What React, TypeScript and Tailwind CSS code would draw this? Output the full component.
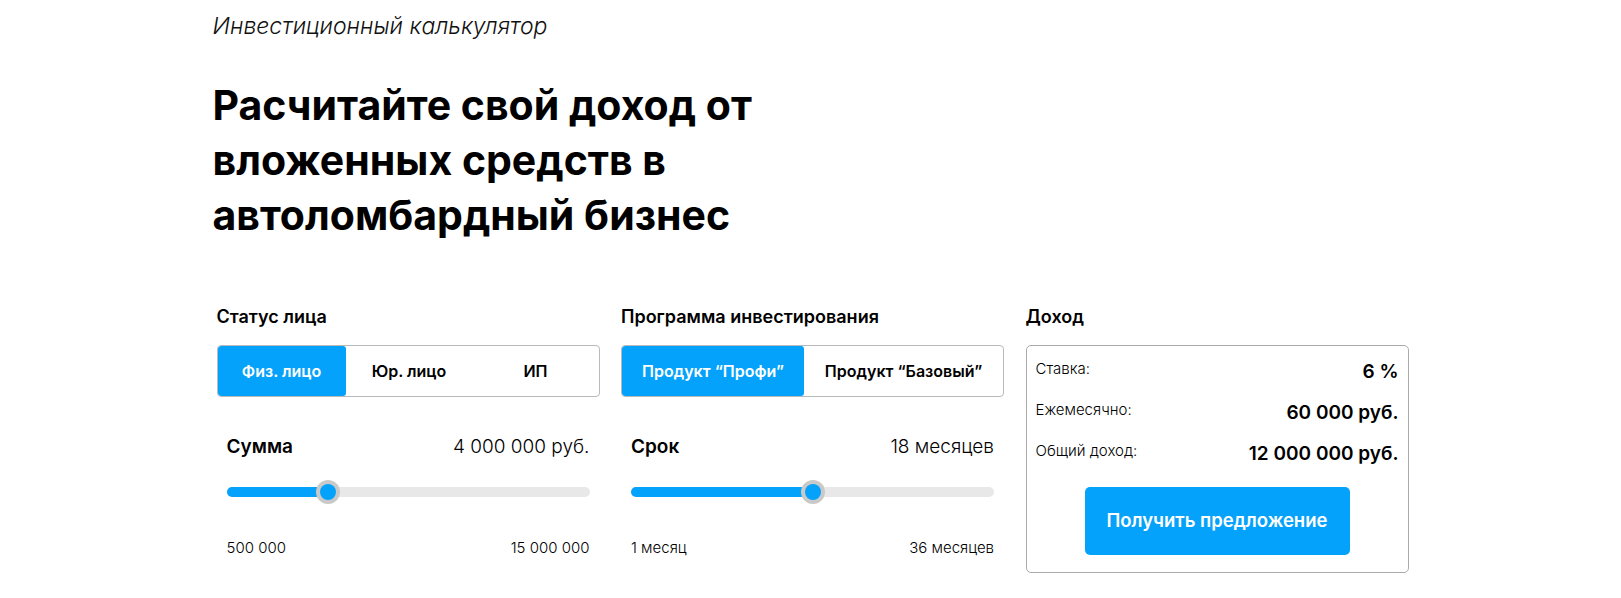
import React from "react";

const BLUE = "bg-[#05a2fb]";

const Segmented = ({
  items,
  widths,
  active,
}: {
  items: string[];
  widths: string[];
  active: number;
}) => (
  <div className="flex h-[52px] rounded-[4px] border border-[#b9b9b9] overflow-hidden">
    {items.map((item, i) => (
      <div
        key={item}
        className={`${widths[i]} flex items-center justify-center text-[16px] font-semibold ${
          i === active ? `${BLUE} text-white rounded-[3px]` : "text-black"
        }`}
      >
        {item}
      </div>
    ))}
  </div>
);

const Slider = ({
  label,
  value,
  min,
  max,
  percent,
}: {
  label: string;
  value: string;
  min: string;
  max: string;
  percent: number;
}) => (
  <div className="px-[10px] pt-[36px]">
    <div className="flex items-baseline justify-between">
      <span className="text-[19px] font-semibold text-black">{label}</span>
      <span className="text-[19px] font-light text-black">{value}</span>
    </div>
    <div className="relative mt-[25px] h-[10px] rounded-full bg-[#e8e8e8]">
      <div className={`h-full rounded-full ${BLUE}`} style={{ width: `${percent}%` }} />
      <div
        className="absolute top-1/2 h-[24px] w-[24px] -translate-x-1/2 -translate-y-1/2 rounded-full bg-[#c9c9c9] flex items-center justify-center"
        style={{ left: `${percent}%` }}
      >
        <div className={`h-[16px] w-[16px] rounded-full ${BLUE}`} />
      </div>
    </div>
    <div className="mt-[40px] flex justify-between text-[15px] font-light text-black">
      <span>{min}</span>
      <span>{max}</span>
    </div>
  </div>
);

const Row = ({ label, value }: { label: string; value: string }) => (
  <div className="flex items-start justify-between">
    <span className="text-[15px] font-light leading-[22px] text-black">{label}</span>
    <span className="pt-[2px] text-[19px] font-semibold leading-[24px] text-black">{value}</span>
  </div>
);

export default function App() {
  return (
    <div className="h-[598px] w-full bg-white font-['Inter',sans-serif] text-black overflow-hidden">
      <div className="mx-auto w-[1196px]">
        <p className="pt-[12px] text-[23px] font-light italic leading-[28px] text-[#111]">
          Инвестиционный калькулятор
        </p>
        <h1 className="mt-[38px] w-[580px] text-[41px] font-bold leading-[55px]">
          Расчитайте свой доход от вложенных средств в автоломбардный бизнес
        </h1>

        <div className="mt-[62px] grid grid-cols-3 gap-x-[21.5px] pl-[4px]">
          <div>
            <div className="text-[18px] font-semibold leading-[24px]">Статус лица</div>
            <div className="mt-[16px]">
              <Segmented
                items={["Физ. лицо", "Юр. лицо", "ИП"]}
                widths={["w-[128px]", "w-[127px]", "flex-1"]}
                active={0}
              />
            </div>
            <Slider
              label="Сумма"
              value="4 000 000 руб."
              min="500 000"
              max="15 000 000"
              percent={28}
            />
          </div>

          <div>
            <div className="text-[18px] font-semibold leading-[24px]">Программа инвестирования</div>
            <div className="mt-[16px]">
              <Segmented
                items={["Продукт “Профи”", "Продукт “Базовый”"]}
                widths={["w-[182px]", "flex-1"]}
                active={0}
              />
            </div>
            <Slider
              label="Срок"
              value="18 месяцев"
              min="1 месяц"
              max="36 месяцев"
              percent={50}
            />
          </div>

          <div>
            <div className="text-[18px] font-semibold leading-[24px]">Доход</div>
            <div className="mt-[16px] h-[228px] rounded-[5px] border border-[#ababab] px-[9px] pt-[12px]">
              <div className="flex flex-col gap-[15px]">
                <Row label="Ставка:" value="6 %" />
                <Row label="Ежемесячно:" value="60 000 руб." />
                <Row label="Общий доход:" value="12 000 000 руб." />
              </div>
              <div className="mt-[21px] flex justify-center">
                <button
                  className={`h-[68px] w-[265px] rounded-[5px] ${BLUE} text-[18.5px] font-semibold text-white`}
                >
                  Получить предложение
                </button>
              </div>
            </div>
          </div>
        </div>
      </div>
    </div>
  );
}
